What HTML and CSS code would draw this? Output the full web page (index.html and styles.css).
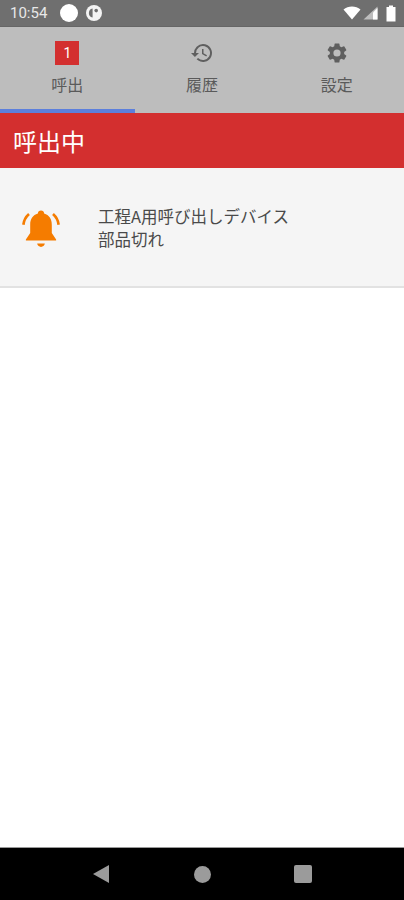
FILE: index.html
```html
<!DOCTYPE html>
<html lang="ja">
<head>
<meta charset="utf-8">
<title>呼出</title>
<link rel="stylesheet" href="styles.css">
</head>
<body>
<div class="screen">
  <header class="status">
    <div class="status-left">
      <span class="time">10:54</span>
      <span class="dot"></span>
      <span class="pdot"><svg viewBox="0 0 16 16" width="16" height="16"><circle cx="8" cy="8" r="8" fill="#f4f4f4"/><path d="M6.600 3.400A4.700 4.700 0 0 0 6.600 12.600V3.400Z" fill="#6f6f6f"/><circle cx="10.200" cy="5.600" r="1.800" fill="#6f6f6f"/></svg></span>
    </div>
    <div class="status-right">
      <svg class="wifi" viewBox="0 0 18 14" width="18" height="14"><path d="M0.500 3.500C5 -0.600 13 -0.600 17.500 3.500L9 13.500Z" fill="#fff"/></svg>
      <svg class="signal" viewBox="0 0 15 14" width="15" height="14"><path d="M14.500 0.500V13.500H0.500Z" fill="#fff" fill-opacity="0.55"/><path d="M14.500 2V13.500H10V6.500Z" fill="#fff"/></svg>
      <svg class="battery" viewBox="0 0 10 17" width="10" height="17"><path d="M3 0.500H7V2H9.500V16.500H0.500V2H3Z" fill="#fff"/></svg>
    </div>
  </header>

  <nav class="tabs">
    <div class="tab tab-active">
      <span class="badge">1</span>
      <span class="tab-label">呼出</span>
    </div>
    <div class="tab">
      <svg class="tab-icon" viewBox="0 0 24 24" width="24" height="24"><path fill="#5f5f5f" d="M13 3a9 9 0 0 0-9 9H1l3.900 3.900L9 12H6a7 7 0 1 1 2.050 4.950L6.630 18.370A9 9 0 1 0 13 3zm-1 5v5l4.250 2.520.77-1.280-3.520-2.090V8z"/></svg>
      <span class="tab-label">履歴</span>
    </div>
    <div class="tab">
      <svg class="tab-icon" viewBox="0 0 24 24" width="24" height="24"><path fill="#5f5f5f" d="M19.140 12.940c.04-.3.06-.61.06-.94s-.02-.64-.07-.94l2.030-1.580a.49.49 0 0 0 .12-.61l-1.920-3.320a.49.49 0 0 0-.59-.22l-2.390.96a7 7 0 0 0-1.620-.94l-.36-2.540a.48.48 0 0 0-.48-.41h-3.840a.47.47 0 0 0-.47.41l-.36 2.540c-.59.24-1.130.57-1.620.94l-2.390-.96a.48.48 0 0 0-.59.22L2.740 8.870a.47.47 0 0 0 .12.61l2.030 1.580c-.05.3-.09.63-.09.94s.02.64.07.94l-2.030 1.580a.49.49 0 0 0-.12.61l1.920 3.320c.12.22.37.29.59.22l2.390-.96c.5.38 1.030.7 1.620.94l.36 2.540c.05.24.24.41.48.41h3.840c.24 0 .44-.17.47-.41l.36-2.540c.59-.24 1.130-.56 1.620-.94l2.390.96c.22.08.47 0 .59-.22l1.920-3.320a.47.47 0 0 0-.12-.61l-2.010-1.580zM12 15.600A3.600 3.600 0 1 1 12 8.400a3.600 3.600 0 0 1 0 7.200z"/></svg>
      <span class="tab-label">設定</span>
    </div>
  </nav>

  <div class="title-bar">呼出中</div>

  <section class="call-row">
    <svg class="bell" viewBox="0 0 40 40" width="48" height="48">
      <path fill="#f57c00" d="M20 5.500c1.500 0 2.600 1.100 2.600 2.500 4.200 1.200 6.400 4.700 6.400 9.200v7l3.600 5.300v1H7.400v-1l3.600-5.300v-7c0-4.500 2.200-8 6.400-9.200 0-1.400 1.100-2.500 2.600-2.500z"/>
      <path fill="#f57c00" d="M16.800 33h6.400c-.3 1.700-1.700 2.800-3.200 2.800s-2.900-1.100-3.200-2.800z"/>
      <path fill="none" stroke="#f57c00" stroke-width="2.200" d="M10 8.300C7.200 10.800 5.700 13.500 5.300 17.300M30 8.300c2.800 2.500 4.300 5.200 4.700 9"/>
    </svg>
    <div class="call-text">
      <div>工程A用呼び出しデバイス</div>
      <div>部品切れ</div>
    </div>
  </section>

  <main class="blank"></main>

  <footer class="navbar">
    <svg viewBox="0 0 18 20" width="18" height="20"><path d="M17 1V19L1 10Z" fill="#9b9b9b"/></svg>
    <span class="nav-circle"></span>
    <span class="nav-square"></span>
  </footer>
</div>
</body>
</html>
```
FILE: styles.css
```css
* { box-sizing: border-box; }
html, body { margin: 0; padding: 0; }
body {
  background: #fff;
  font-family: "Noto Sans CJK JP", "Roboto", sans-serif;
}
.screen {
  width: 404px;
  height: 900px;
  display: flex;
  flex-direction: column;
  overflow: hidden;
}
.status {
  height: 27px;
  flex: none;
  background: #6f6f6f;
  border-bottom: 1px solid #666;
  display: flex;
  justify-content: space-between;
  align-items: center;
  padding: 0 8px 0 10px;
  color: #e8e8e8;
}
.status-left { display: flex; align-items: center; }
.time { font-family: Roboto, sans-serif; font-size: 15px; width: 50px; }
.dot { width: 18px; height: 18px; border-radius: 50%; background: #fff; margin-right: 8px; }
.pdot { width: 16px; height: 16px; display: flex; }
.status-right { display: flex; align-items: center; gap: 2px; }
.signal { margin-right: 6px; }
.tabs {
  height: 86px;
  flex: none;
  background: #bdbdbd;
  display: flex;
}
.tab {
  flex: 1;
  display: flex;
  flex-direction: column;
  align-items: center;
  padding-top: 14px;
  border-bottom: 4px solid transparent;
}
.tab-active { border-bottom-color: #5c7fdc; }
.badge {
  width: 24px;
  height: 24px;
  background: #d32f2f;
  color: #fff;
  font-family: Roboto, sans-serif;
  font-size: 14px;
  line-height: 24px;
  text-align: center;
}
.tab-icon { display: block; }
.tab-label {
  font-size: 16px;
  line-height: 20px;
  color: #5a5a5a;
  margin-top: 9px;
}
.title-bar {
  height: 55px;
  flex: none;
  background: #d32f2f;
  color: #fff;
  font-size: 24px;
  line-height: 56px;
  padding-left: 13px;
}
.call-row {
  height: 120px;
  flex: none;
  background: #f5f5f5;
  border-bottom: 2px solid #e2e2e2;
  display: flex;
  align-items: center;
  padding: 2px 0 0 17px;
}
.bell { flex: none; margin-right: 33px; }
.call-text {
  font-size: 16.500px;
  line-height: 23px;
  color: #4a4a4a;
}
.blank { flex: 1; background: #fff; }
.navbar {
  height: 53px;
  flex: none;
  background: #000;
  border-top: 1px solid #999;
  display: flex;
  align-items: center;
  justify-content: space-between;
  padding: 0 92px;
}
.nav-circle { width: 17px; height: 17px; border-radius: 50%; background: #9b9b9b; }
.nav-square { width: 18px; height: 18px; border-radius: 2px; background: #9b9b9b; }
```
